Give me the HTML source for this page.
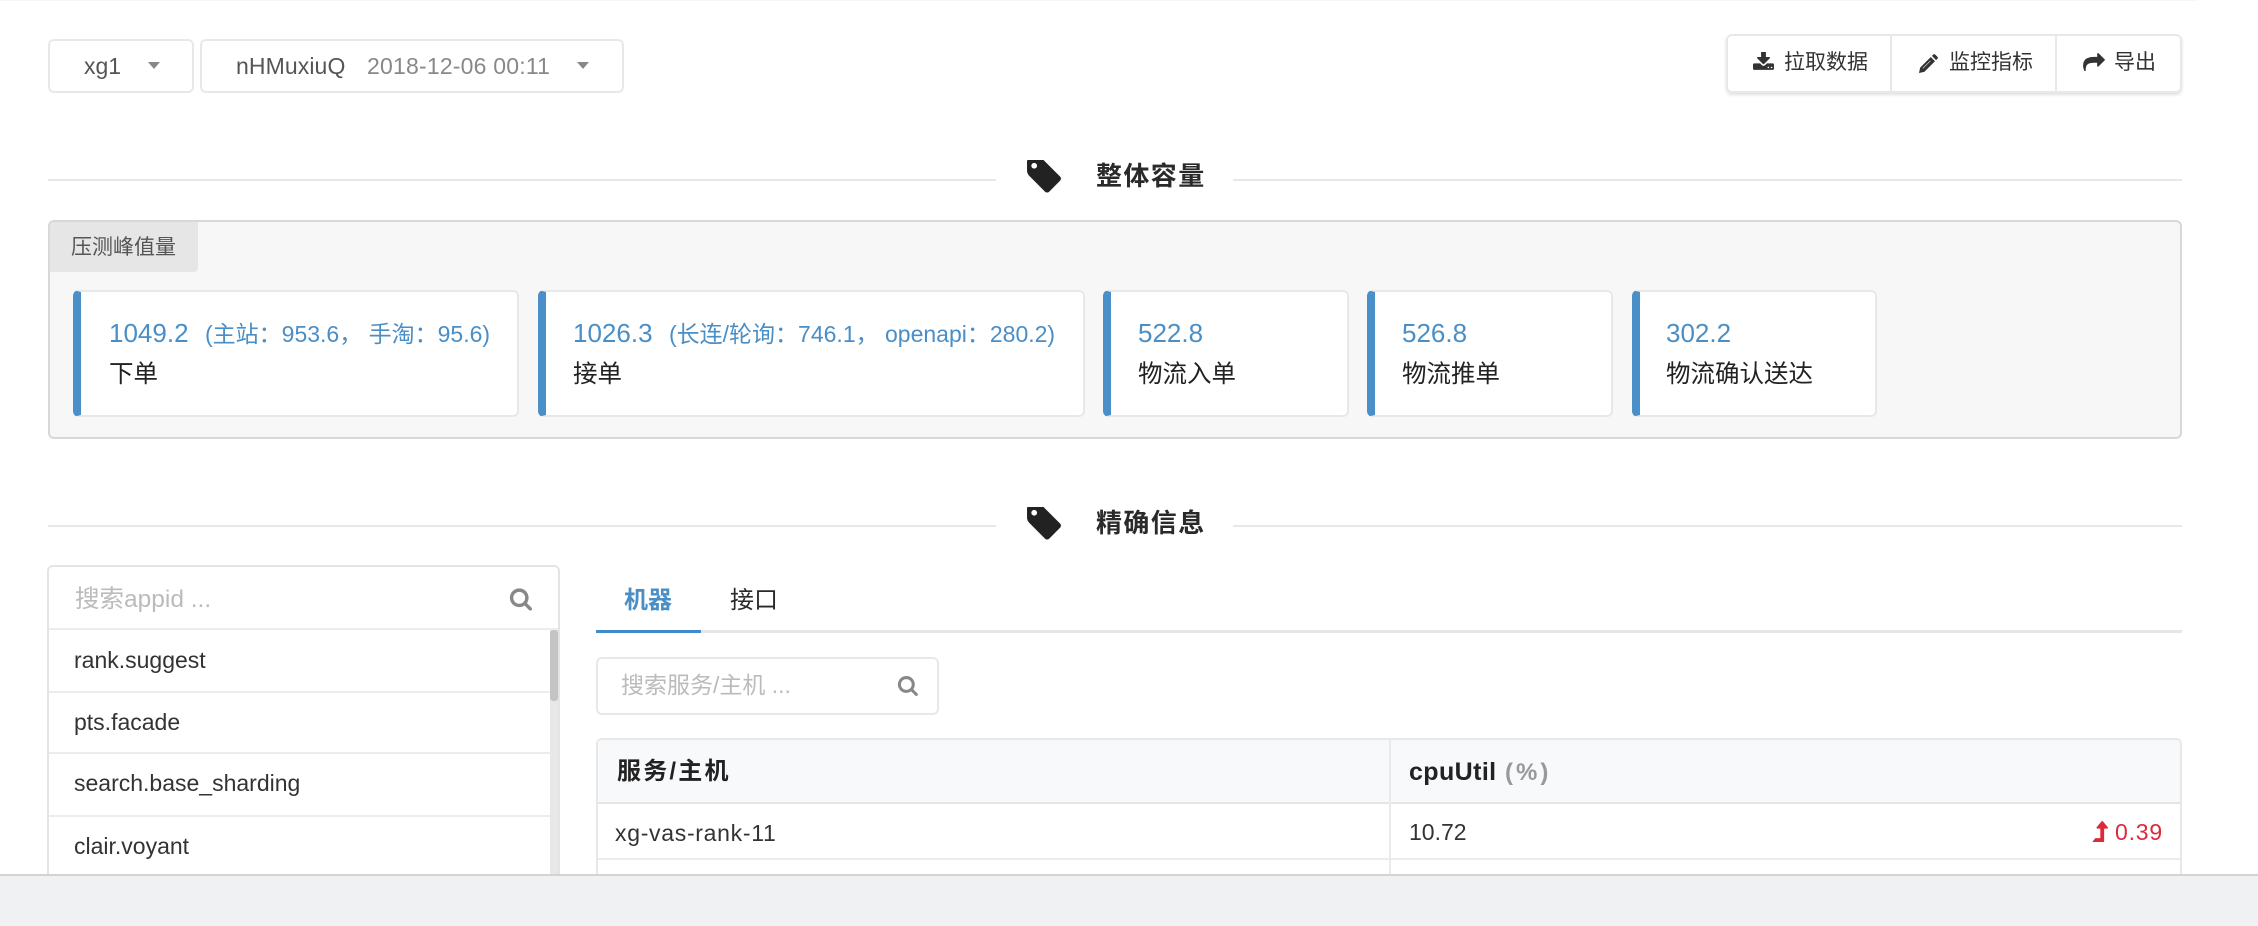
<!DOCTYPE html>
<html><head><meta charset="utf-8"><style>
*{box-sizing:border-box;margin:0;padding:0}
html,body{width:2258px;height:926px;overflow:hidden;background:#fff}
body{position:relative;font-family:"Liberation Sans","Noto Sans CJK SC",sans-serif;color:#333;font-size:23px;filter:blur(.35px)}
.a{position:absolute}
.t{position:absolute;white-space:nowrap;line-height:30px;height:30px}
.box{position:absolute;background:#fff;border:2px solid #e8e8e8;border-radius:6px}
.caret{position:absolute;width:0;height:0;border-left:6px solid transparent;border-right:6px solid transparent;border-top:7px solid #888}
.card{position:absolute;top:290px;height:127px;background:#fff;border:2px solid #e8e8e8;border-left:8px solid #4a8fc7;border-radius:6px}
.blue{color:#4a8ec6}
svg{position:absolute;display:block}
.h{font-weight:700;font-size:26px;letter-spacing:1.4px;color:#2a2a2a}
.line{position:absolute;height:2px;background:#e8e8e8}
.sm{font-size:21px}
.item{font-size:23px;color:#333}
.sep{position:absolute;background:#ececec;height:2px}
.v{font-size:24.5px;color:#222}
</style></head><body>
<div class="a" style="left:0;top:0;width:2197px;height:1px;background:#f7f7f7"></div>

<div class="box" style="left:48px;top:39px;width:146px;height:54px"></div>
<div class="t" style="left:84px;top:51px;color:#555">xg1</div>
<div class="caret" style="left:148px;top:62px"></div>
<div class="box" style="left:200px;top:39px;width:424px;height:54px"></div>
<div class="t" style="left:236px;top:51px;color:#555;letter-spacing:.1px">nHMuxiuQ</div>
<div class="t" style="left:367px;top:51px;color:#888;letter-spacing:.2px">2018-12-06 00:11</div>
<div class="caret" style="left:577px;top:62px"></div>

<div class="box" style="left:1726px;top:34px;width:456px;height:59px;box-shadow:0 2px 3px rgba(0,0,0,.12)"></div>
<div class="a" style="left:1890px;top:35px;width:2px;height:57px;background:#e8e8e8"></div>
<div class="a" style="left:2055px;top:35px;width:2px;height:57px;background:#e8e8e8"></div>
<svg style="left:1753px;top:52px" width="21" height="18" viewBox="64 128 1664 1408" fill="#333"><path d="M1344 1344q0-26-19-45t-45-19-45 19-19 45 19 45 45 19 45-19 19-45zm256 0q0-26-19-45t-45-19-45 19-19 45 19 45 45 19 45-19 19-45zm128-224v320q0 40-28 68t-68 28h-1472q-40 0-68-28t-28-68v-320q0-40 28-68t68-28h465l135 136q58 56 136 56t136-56l136-136h464q40 0 68 28t28 68zm-325-569q17 41-14 70l-448 448q-18 19-45 19t-45-19l-448-448q-31-29-14-70 17-39 59-39h256v-448q0-26 19-45t45-19h256q26 0 45 19t19 45v448h256q42 0 59 39z"/></svg>
<div class="t sm" style="left:1784px;top:48px">拉取数据</div>
<svg style="left:1919px;top:54px" width="19" height="19" viewBox="0 0 100 100" fill="#333"><path d="M0 100 L6 72 L62 16 L84 38 L28 94 Z M68 10 L76 2 Q80 -1 84 2 L98 16 Q101 20 98 24 L90 32 Z"/><path d="M20 76 L60 36" stroke="#fff" stroke-width="3" fill="none"/></svg>
<div class="t sm" style="left:1949px;top:48px">监控指标</div>
<svg style="left:2083px;top:53px" width="22" height="18" viewBox="0 128 1792 1408" fill="#333"><path d="M1792 640q0 26-19 45l-512 512q-19 19-45 19t-45-19-19-45v-256h-224q-98 0-175.5 6t-154 21.5-133 42.5-105.5 69.5-79 106.5-47 161-17 227q0 46 4 104 0 4 1.5 15.5t1.5 17.5q0 13-7.5 21.5t-20.5 8.5q-14 0-26-15-7-9-13-22t-13.5-30-10.5-24q-127-285-127-451 0-199 53-333 162-403 875-403h224v-256q0-26 19-45t45-19 45 19l512 512q19 19 19 45z"/></svg>
<div class="t sm" style="left:2114px;top:48px">导出</div>

<div class="line" style="left:48px;top:179px;width:948px"></div>
<div class="line" style="left:1233px;top:179px;width:949px"></div>
<svg style="left:1027px;top:160px" width="34" height="33" viewBox="128 192 1515 1472" fill="#222"><path d="M576 448q0-53-37.5-90.5t-90.5-37.5-90.5 37.5-37.5 90.5 37.5 90.5 90.5 37.5 90.5-37.5 37.5-90.5zm1067 576q0 53-37 90l-491 492q-39 37-91 37-53 0-90-37l-715-716q-38-37-64.5-101t-26.5-117v-416q0-52 38-90t90-38h416q53 0 117 26.5t102 64.5l715 714q37 39 37 91z"/></svg>
<div class="t h" style="left:1096px;top:161px">整体容量</div>

<div class="a" style="left:48px;top:220px;width:2134px;height:219px;background:#f7f7f7;border:2px solid #d8d8d8;border-radius:6px"></div>
<div class="a" style="left:50px;top:222px;width:148px;height:50px;background:#e6e6e6;border-radius:4px 0 4px 0"></div>
<div class="t" style="left:71px;top:233px;color:#555;font-size:21px">压测峰值量</div>

<div class="card" style="left:73px;width:446px"></div>
<div class="t blue" style="left:109px;top:318px;font-size:26px">1049.2</div>
<div class="t blue" style="left:205px;top:319px;font-size:23px">(主站：953.6， 手淘：95.6)</div>
<div class="t v" style="left:109px;top:360px">下单</div>

<div class="card" style="left:538px;width:547px"></div>
<div class="t blue" style="left:573px;top:318px;font-size:26px">1026.3</div>
<div class="t blue" style="left:669px;top:319px;font-size:23px">(长连/轮询：746.1， openapi：280.2)</div>
<div class="t v" style="left:573px;top:360px">接单</div>

<div class="card" style="left:1103px;width:246px"></div>
<div class="t blue" style="left:1138px;top:318px;font-size:26px">522.8</div>
<div class="t v" style="left:1138px;top:360px">物流入单</div>

<div class="card" style="left:1367px;width:246px"></div>
<div class="t blue" style="left:1402px;top:318px;font-size:26px">526.8</div>
<div class="t v" style="left:1402px;top:360px">物流推单</div>

<div class="card" style="left:1632px;width:245px"></div>
<div class="t blue" style="left:1666px;top:318px;font-size:26px">302.2</div>
<div class="t v" style="left:1666px;top:360px">物流确认送达</div>

<div class="line" style="left:48px;top:525px;width:948px"></div>
<div class="line" style="left:1233px;top:525px;width:949px"></div>
<svg style="left:1027px;top:507px" width="34" height="33" viewBox="128 192 1515 1472" fill="#222"><path d="M576 448q0-53-37.5-90.5t-90.5-37.5-90.5 37.5-37.5 90.5 37.5 90.5 90.5 37.5 90.5-37.5 37.5-90.5zm1067 576q0 53-37 90l-491 492q-39 37-91 37-53 0-90-37l-715-716q-38-37-64.5-101t-26.5-117v-416q0-52 38-90t90-38h416q53 0 117 26.5t102 64.5l715 714q37 39 37 91z"/></svg>
<div class="t h" style="left:1096px;top:508px">精确信息</div>

<div class="box" style="left:47px;top:565px;width:513px;height:340px;border-color:#e4e4e4"></div>
<div class="t" style="left:75px;top:585px;color:#bbb;font-size:24.5px">搜索appid ...</div>
<svg style="left:509px;top:588px" width="23" height="23" viewBox="0 128 1728 1664" fill="#888"><path d="M1216 832q0-185-131.5-316.5t-316.5-131.5-316.5 131.5-131.5 316.5 131.5 316.5 316.5 131.5 316.5-131.5 131.5-316.5zm512 832q0 52-38 90t-90 38q-54 0-90-38l-343-342q-179 124-399 124-143 0-273.5-55.5t-225-150-150-225-55.5-273.5 55.5-273.5 150-225 225-150 273.5-55.5 273.5 55.5 225 150 150 225 55.5 273.5q0 220-124 399l343 343q37 37 37 90z"/></svg>
<div class="sep" style="left:49px;top:628px;width:509px"></div>
<div class="sep" style="left:49px;top:691px;width:501px"></div>
<div class="sep" style="left:49px;top:752px;width:501px"></div>
<div class="sep" style="left:49px;top:815px;width:501px"></div>
<div class="a" style="left:550px;top:630px;width:8px;height:250px;background:#e8e8e8"></div>
<div class="a" style="left:550px;top:630px;width:8px;height:71px;background:#c4c4c4;border-radius:3px"></div>
<div class="t item" style="left:74px;top:645px">rank.suggest</div>
<div class="t item" style="left:74px;top:707px">pts.facade</div>
<div class="t item" style="left:74px;top:768px">search.base_sharding</div>
<div class="t item" style="left:74px;top:831px">clair.voyant</div>

<div class="t" style="left:624px;top:586px;font-weight:700;color:#4a8ec6;font-size:24px">机器</div>
<div class="t" style="left:730px;top:586px;font-size:24px;color:#2a2a2a">接口</div>
<div class="a" style="left:596px;top:630px;width:1586px;height:3px;background:#e6e6e6"></div>
<div class="a" style="left:596px;top:630px;width:105px;height:3px;background:#3f8bcb"></div>

<div class="box" style="left:596px;top:657px;width:343px;height:58px"></div>
<div class="t" style="left:621px;top:670px;color:#bbb;font-size:23px">搜索服务/主机 ...</div>
<svg style="left:897px;top:676px" width="21" height="20" viewBox="0 128 1728 1664" fill="#888"><path d="M1216 832q0-185-131.5-316.5t-316.5-131.5-316.5 131.5-131.5 316.5 131.5 316.5 316.5 131.5 316.5-131.5 131.5-316.5zm512 832q0 52-38 90t-90 38q-54 0-90-38l-343-342q-179 124-399 124-143 0-273.5-55.5t-225-150-150-225-55.5-273.5 55.5-273.5 150-225 225-150 273.5-55.5 273.5 55.5 225 150 150 225 55.5 273.5q0 220-124 399l343 343q37 37 37 90z"/></svg>

<div class="box" style="left:596px;top:738px;width:1586px;height:170px"></div>
<div class="a" style="left:598px;top:740px;width:1582px;height:63px;background:#f8f9fb;border-radius:5px 5px 0 0"></div>
<div class="sep" style="left:598px;top:802px;width:1582px;background:#e4e5e6"></div>
<div class="sep" style="left:598px;top:858px;width:1582px"></div>
<div class="a" style="left:1389px;top:740px;width:2px;height:140px;background:#eaeaea"></div>
<div class="t" style="left:617px;top:757px;font-weight:700;font-size:24px;color:#222;letter-spacing:2.2px">服务/主机</div>
<div class="t" style="left:1409px;top:757px;font-weight:700;font-size:25px;color:#222;letter-spacing:.4px">cpuUtil</div>
<div class="t" style="left:1505px;top:758px;font-weight:700;font-size:24px;color:#999;letter-spacing:3px">(%)</div>
<div class="t" style="left:615px;top:818px;letter-spacing:.7px">xg-vas-rank-11</div>
<div class="t" style="left:1409px;top:817px">10.72</div>
<svg style="left:2091px;top:821px" width="18" height="21" viewBox="300 128 1150 1408" fill="#dc2a3a"><path d="M1402 603q-18 37-58 37h-192v864q0 14-9 23t-23 9h-704q-21 0-29-18-8-20 4-35l160-192q9-11 25-11h320v-640h-192q-40 0-58-37-17-37 9-68l320-384q18-22 49-22t49 22l320 384q27 32 9 68z"/></svg>
<div class="t" style="left:2115px;top:817px;color:#dc2a3a;letter-spacing:.8px">0.39</div>

<div class="a" style="left:0;top:874px;width:2258px;height:52px;background:#f0f1f3;border-top:2px solid #d2d3d5"></div>
</body></html>
